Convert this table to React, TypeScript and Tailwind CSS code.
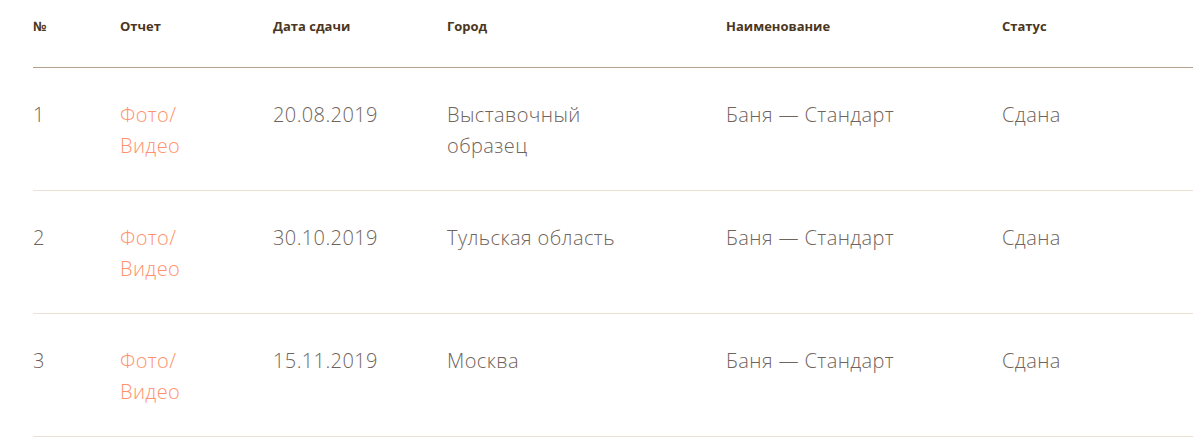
import React from 'react';

const rows = [
  { n: 1, date: '20.08.2019', city: 'Выставочный образец', name: 'Баня — Стандарт', status: 'Сдана' },
  { n: 2, date: '30.10.2019', city: 'Тульская область', name: 'Баня — Стандарт', status: 'Сдана' },
  { n: 3, date: '15.11.2019', city: 'Москва', name: 'Баня — Стандарт', status: 'Сдана' },
];

const cols = 'grid grid-cols-[87px_153px_174px_279px_276px_1fr]';

const App: React.FC = () => {
  return (
    <div className="w-[1198px] h-[437px] bg-white pl-[33px] pr-[5px]" style={{ fontFamily: '"Open Sans", "Liberation Sans", sans-serif' }}>
      <div className={`${cols} border-b border-[#b4a28f] pt-[18px] pb-[33px] text-[13px] leading-[16px] font-bold text-[#4b3621]`}>
        <div>№</div>
        <div>Отчет</div>
        <div>Дата сдачи</div>
        <div>Город</div>
        <div>Наименование</div>
        <div>Статус</div>
      </div>
      {rows.map((r) => (
        <div key={r.n} className={`${cols} border-b border-[#eae0d3] pt-[31px] pb-[29px] text-[20px] leading-[31px] tracking-[0.02em] font-light text-[#6f645b]`}>
          <div>{r.n}</div>
          <div>
            <a href="#" className="text-[#ff916d]">Фото/<br />Видео</a>
          </div>
          <div>{r.date}</div>
          <div className="max-w-[190px]">{r.city}</div>
          <div>{r.name}</div>
          <div>{r.status}</div>
        </div>
      ))}
    </div>
  );
};

export default App;
